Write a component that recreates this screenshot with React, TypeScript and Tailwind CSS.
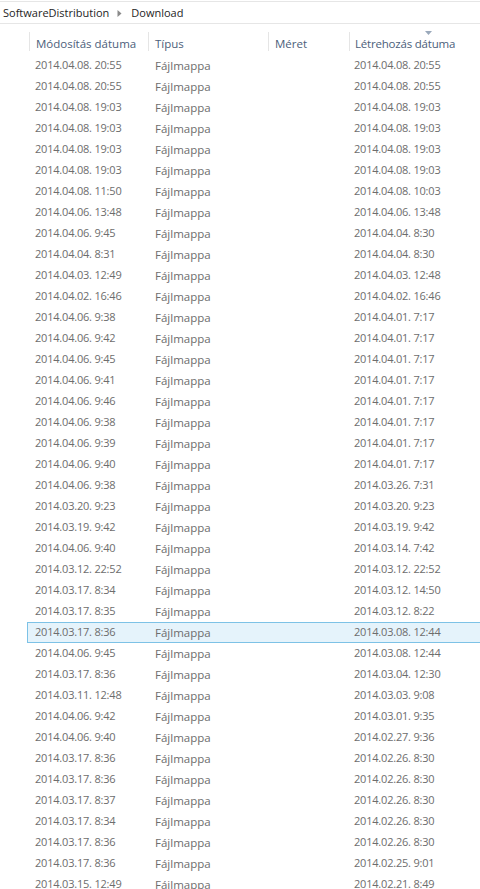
import React from 'react';

type Row = { mod: string; created: string };

const rows: Row[] = [
  { mod: '2014.04.08. 20:55', created: '2014.04.08. 20:55' },
  { mod: '2014.04.08. 20:55', created: '2014.04.08. 20:55' },
  { mod: '2014.04.08. 19:03', created: '2014.04.08. 19:03' },
  { mod: '2014.04.08. 19:03', created: '2014.04.08. 19:03' },
  { mod: '2014.04.08. 19:03', created: '2014.04.08. 19:03' },
  { mod: '2014.04.08. 19:03', created: '2014.04.08. 19:03' },
  { mod: '2014.04.08. 11:50', created: '2014.04.08. 10:03' },
  { mod: '2014.04.06. 13:48', created: '2014.04.06. 13:48' },
  { mod: '2014.04.06. 9:45', created: '2014.04.04. 8:30' },
  { mod: '2014.04.04. 8:31', created: '2014.04.04. 8:30' },
  { mod: '2014.04.03. 12:49', created: '2014.04.03. 12:48' },
  { mod: '2014.04.02. 16:46', created: '2014.04.02. 16:46' },
  { mod: '2014.04.06. 9:38', created: '2014.04.01. 7:17' },
  { mod: '2014.04.06. 9:42', created: '2014.04.01. 7:17' },
  { mod: '2014.04.06. 9:45', created: '2014.04.01. 7:17' },
  { mod: '2014.04.06. 9:41', created: '2014.04.01. 7:17' },
  { mod: '2014.04.06. 9:46', created: '2014.04.01. 7:17' },
  { mod: '2014.04.06. 9:38', created: '2014.04.01. 7:17' },
  { mod: '2014.04.06. 9:39', created: '2014.04.01. 7:17' },
  { mod: '2014.04.06. 9:40', created: '2014.04.01. 7:17' },
  { mod: '2014.04.06. 9:38', created: '2014.03.26. 7:31' },
  { mod: '2014.03.20. 9:23', created: '2014.03.20. 9:23' },
  { mod: '2014.03.19. 9:42', created: '2014.03.19. 9:42' },
  { mod: '2014.04.06. 9:40', created: '2014.03.14. 7:42' },
  { mod: '2014.03.12. 22:52', created: '2014.03.12. 22:52' },
  { mod: '2014.03.17. 8:34', created: '2014.03.12. 14:50' },
  { mod: '2014.03.17. 8:35', created: '2014.03.12. 8:22' },
  { mod: '2014.03.17. 8:36', created: '2014.03.08. 12:44' },
  { mod: '2014.04.06. 9:45', created: '2014.03.08. 12:44' },
  { mod: '2014.03.17. 8:36', created: '2014.03.04. 12:30' },
  { mod: '2014.03.11. 12:48', created: '2014.03.03. 9:08' },
  { mod: '2014.04.06. 9:42', created: '2014.03.01. 9:35' },
  { mod: '2014.04.06. 9:40', created: '2014.02.27. 9:36' },
  { mod: '2014.03.17. 8:36', created: '2014.02.26. 8:30' },
  { mod: '2014.03.17. 8:36', created: '2014.02.26. 8:30' },
  { mod: '2014.03.17. 8:37', created: '2014.02.26. 8:30' },
  { mod: '2014.03.17. 8:34', created: '2014.02.26. 8:30' },
  { mod: '2014.03.17. 8:36', created: '2014.02.26. 8:30' },
  { mod: '2014.03.17. 8:36', created: '2014.02.25. 9:01' },
  { mod: '2014.03.15. 12:49', created: '2014.02.21. 8:49' },
];

const SELECTED = 27;

export default function App() {
  return (
    <div
      className="w-[480px] h-[889px] overflow-hidden bg-white text-[11.5px]"
      style={{ fontFamily: '"Segoe UI", "Open Sans", "Noto Sans", sans-serif' }}
    >
      {/* Breadcrumb */}
      <div className="h-[23px] mt-[1px] pt-[1px] border-t border-b border-[#e6e6e6] flex items-center pl-[3px] text-[11px] text-[#1e1e1e]">
        <span>SoftwareDistribution</span>
        <svg className="w-[5px] h-[7px] ml-[8px] mr-[9px]" viewBox="0 0 5 7">
          <path d="M0.5 0 L4.5 3.5 L0.5 7 Z" fill="#8a8a8a" />
        </svg>
        <span>Download</span>
      </div>

      {/* Column headers */}
      <div className="relative h-[31px] flex items-start pt-[8px] pl-[29px] text-[#4c607a]">
        <div className="w-[119px] h-[19px] border-l border-[#e5e5e5] pl-[6px] pt-[4px] leading-[16px]">
          Módosítás dátuma
        </div>
        <div className="w-[120px] h-[19px] border-l border-[#e5e5e5] pl-[6px] pt-[4px] leading-[16px]">
          Típus
        </div>
        <div className="w-[81px] h-[19px] border-l border-[#e5e5e5] pl-[6px] pt-[4px] leading-[16px]">
          Méret
        </div>
        <div className="flex-1 h-[19px] border-l border-[#e5e5e5] pl-[5px] pt-[4px] leading-[16px] tracking-[-0.2px]">
          Létrehozás dátuma
        </div>
        <svg className="absolute left-[425px] top-[7px] w-[7px] h-[4px]" viewBox="0 0 7 4">
          <path d="M0 0 L7 0 L3.5 4 Z" fill="#9aa9bb" />
        </svg>
      </div>

      {/* Rows */}
      <div className="pl-[27px] w-[490px]">
        {rows.map((r, i) => (
          <div
            key={i}
            className={`h-[21px] flex items-center text-[#6d6d6d] border ${
              i === SELECTED ? 'bg-[#e5f3fb] border-[#7dc2e6]' : 'border-transparent'
            }`}
          >
            <div className="w-[120px] pl-[7px] whitespace-nowrap text-[11px] tracking-[-0.2px]">{r.mod}</div>
            <div className="w-[120px] pl-[7px]">Fájlmappa</div>
            <div className="w-[81px]"></div>
            <div className="flex-1 pl-[5px] whitespace-nowrap text-[11px] tracking-[-0.2px]">{r.created}</div>
          </div>
        ))}
      </div>
    </div>
  );
}
